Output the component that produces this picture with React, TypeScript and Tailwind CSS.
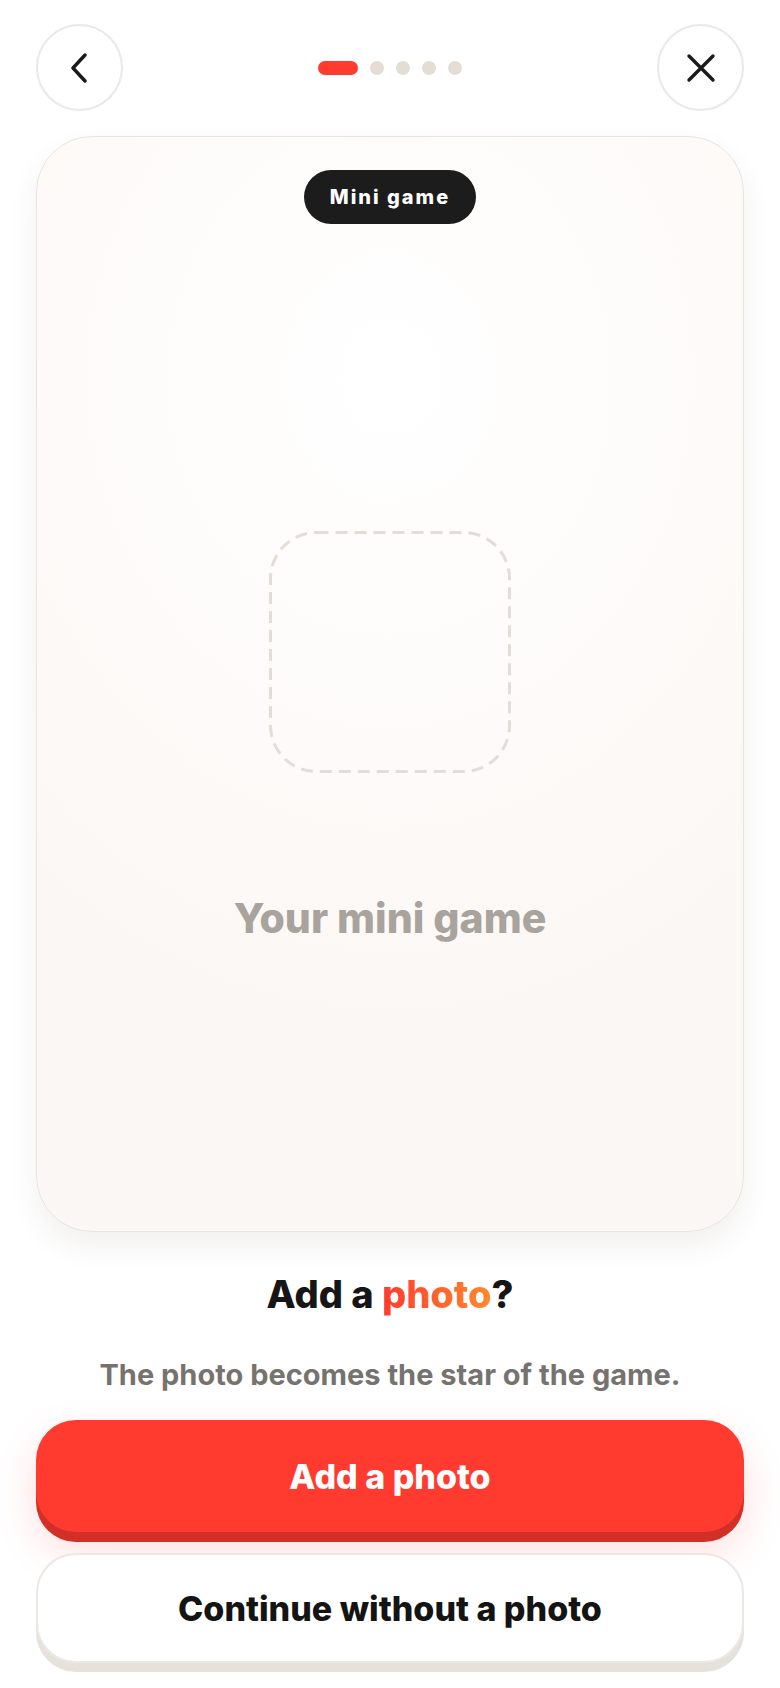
import { ReactNode } from "react";

const font = { fontFamily: "Inter, 'Noto Sans', sans-serif" };

export default function App() {
  return (
    <div className="min-h-[1688px] w-full bg-white px-[36px] pt-[24px]" style={font}>
      <header className="flex h-[87px] items-center justify-between">
        <CircleButton label="Back">
          <svg width="20" height="30" viewBox="0 0 20 30" fill="none">
            <polyline
              points="15,2 3,15 15,28"
              stroke="#1a1a1a"
              strokeWidth="3.4"
              strokeLinecap="round"
              strokeLinejoin="round"
            />
          </svg>
        </CircleButton>
        <div className="flex items-center gap-[12px]">
          <span className="h-[14px] w-[40px] rounded-full bg-[#ff3b30]" />
          <span className="h-[14px] w-[14px] rounded-full bg-[#e3ddd5]" />
          <span className="h-[14px] w-[14px] rounded-full bg-[#e3ddd5]" />
          <span className="h-[14px] w-[14px] rounded-full bg-[#e3ddd5]" />
          <span className="h-[14px] w-[14px] rounded-full bg-[#e3ddd5]" />
        </div>
        <CircleButton label="Close">
          <svg width="30" height="30" viewBox="0 0 30 30" fill="none">
            <path d="M3 3 L27 27 M27 3 L3 27" stroke="#1a1a1a" strokeWidth="3.4" strokeLinecap="round" />
          </svg>
        </CircleButton>
      </header>

      <section className="mt-[25px] flex h-[1096px] flex-col items-center rounded-[56px] border-[1.5px] border-[#e8e4df] bg-[radial-gradient(ellipse_80%_60%_at_50%_22%,#ffffff_0%,#fefcfb_40%,#fbf7f4_100%)] shadow-[0_14px_30px_rgba(60,40,20,0.07)]">
        <div className="mt-[33px] flex h-[54px] w-[172px] items-center justify-center rounded-full bg-[#1c1c1c] text-[20px] font-extrabold tracking-[0.1em] text-white">
          Mini game
        </div>
        <svg className="mt-[307px]" width="242" height="242" viewBox="0 0 242 242" fill="none">
          <rect
            x="1.5"
            y="1.5"
            width="239"
            height="239"
            rx="46"
            stroke="#e2ddd6"
            strokeWidth="3"
            strokeDasharray="12 7"
          />
        </svg>
        <p className="mt-[121px] text-[41px] leading-[48px] font-extrabold text-[#a8a39d]">Your mini game</p>
      </section>

      <h1 className="mt-[40px] text-center text-[38px] leading-[44px] font-extrabold text-[#161616]">
        Add a{" "}
        <span className="bg-[linear-gradient(90deg,#ff3b2f,#ff8a2e)] bg-clip-text text-transparent">photo</span>?
      </h1>
      <p className="mt-[43px] text-center text-[29px] leading-[32px] font-bold text-[#76736f]">
        The photo becomes the star of the game.
      </p>

      <button
        type="button"
        className="mt-[29px] flex h-[112px] w-full items-center justify-center rounded-[40px] bg-[#ff3b30] text-[34px] font-extrabold text-white shadow-[0_10px_0_#d22f27,0_18px_40px_rgba(255,59,48,0.18)]"
      >
        Add a photo
      </button>
      <button
        type="button"
        className="mt-[21px] flex h-[110px] w-full items-center justify-center rounded-[40px] border-2 border-[#ece8e4] bg-white text-[34px] font-extrabold text-[#141414] shadow-[0_9px_0_#e6e1db]"
      >
        Continue without a photo
      </button>
    </div>
  );
}

function CircleButton({ label, children }: { label: string; children: ReactNode }) {
  return (
    <button
      type="button"
      aria-label={label}
      className="grid h-[87px] w-[87px] place-items-center rounded-full border-2 border-[#ebe8e5] bg-white"
    >
      {children}
    </button>
  );
}
